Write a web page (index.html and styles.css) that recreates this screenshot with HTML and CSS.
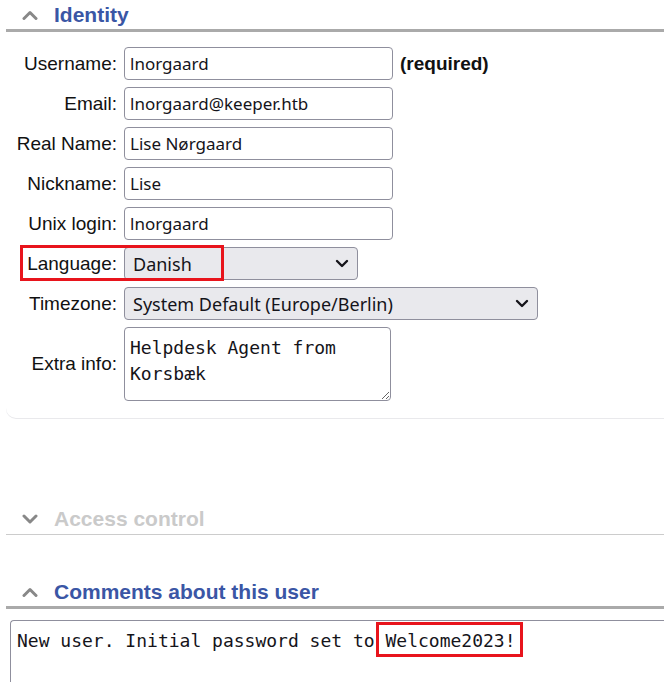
FILE: index.html
```html
<!DOCTYPE html>
<html lang="en">
<head>
<meta charset="utf-8">
<title>User - Identity</title>
<link rel="stylesheet" href="styles.css">
</head>
<body>
<div class="section identity">
  <div class="head head-open">
    <svg class="chev" width="16" height="10" viewBox="0 0 16 10"><polyline points="2,8.5 8,2.5 14,8.5"/></svg>
    <span class="title">Identity</span>
  </div>
  <div class="form">
    <label class="lbl">Username:</label>
    <div class="field"><input class="txt" type="text" value="lnorgaard"><span class="req">(required)</span></div>
    <label class="lbl">Email:</label>
    <div class="field"><input class="txt" type="text" value="lnorgaard@keeper.htb"></div>
    <label class="lbl">Real Name:</label>
    <div class="field"><input class="txt" type="text" value="Lise Nørgaard"></div>
    <label class="lbl">Nickname:</label>
    <div class="field"><input class="txt" type="text" value="Lise"></div>
    <label class="lbl">Unix login:</label>
    <div class="field"><input class="txt" type="text" value="lnorgaard"></div>
    <label class="lbl">Language:</label>
    <div class="field"><select class="sel sel-lang"><option>Danish</option></select></div>
    <label class="lbl">Timezone:</label>
    <div class="field"><select class="sel sel-tz"><option>System Default (Europe/Berlin)</option></select></div>
    <label class="lbl lbl-area">Extra info:</label>
    <div class="field"><textarea class="area">Helpdesk Agent from
Korsbæk</textarea></div>
    <div class="mark mark-lang"></div>
  </div>
</div>

<div class="section access">
  <div class="head head-closed">
    <svg class="chev" width="16" height="10" viewBox="0 0 16 10"><polyline points="2,2 8,8 14,2"/></svg>
    <span class="title title-dim">Access control</span>
  </div>
</div>

<div class="section comments">
  <div class="head head-open">
    <svg class="chev" width="16" height="10" viewBox="0 0 16 10"><polyline points="2,8.5 8,2.5 14,8.5"/></svg>
    <span class="title">Comments about this user</span>
  </div>
  <div class="comment-box">New user. Initial password set to <span class="hl">Welcome2023!</span></div>
</div>
</body>
</html>
```

FILE: styles.css
```css
html, body {
  margin: 0;
  padding: 0;
  overflow: hidden;
  background: #ffffff;
}
body {
  font-family: "Liberation Sans", Arial, sans-serif;
  color: #1a1a1a;
  width: 664px;
  height: 682px;
  overflow: hidden;
}
.section {
  margin-left: 6px;
}
.head {
  display: flex;
  align-items: center;
  padding-left: 16px;
  box-sizing: border-box;
}
.head-open {
  height: 32px;
  border-bottom: 3px solid #aaaaaa;
}
.head-closed {
  height: 31px;
  border-bottom: 1px solid #cccccc;
}
.chev {
  display: block;
  flex: none;
}
.chev polyline {
  fill: none;
  stroke: #888888;
  stroke-width: 3;
  stroke-linecap: round;
  stroke-linejoin: round;
}
.title {
  margin-left: 16px;
  font-size: 21px;
  font-weight: bold;
  color: #3a56a5;
  line-height: 24px;
}
.title-dim {
  color: #cacaca;
}
.identity {
  border-radius: 0 0 0 10px;
  box-shadow: 0 1px 0 #e9e9ec;
  padding-bottom: 17px;
}
.form {
  position: relative;
  display: grid;
  grid-template-columns: 111px auto;
  column-gap: 7px;
  row-gap: 7px;
  padding-top: 15px;
}
.lbl {
  font-size: 19px;
  text-align: right;
  align-self: center;
  color: #111111;
}
.field {
  display: flex;
  align-items: center;
  gap: 7px;
}
.txt {
  box-sizing: border-box;
  width: 269px;
  height: 33px;
  margin: 0;
  padding: 0 5px;
  border: 1px solid #8f8f9d;
  border-radius: 4px;
  font-family: "Noto Sans", "Open Sans", sans-serif;
  font-size: 17px;
  color: #15141a;
  background: #ffffff;
}
.req {
  font-size: 19px;
  font-weight: bold;
  color: #111111;
}
.sel {
  box-sizing: border-box;
  height: 33px;
  margin: 0;
  padding: 0 30px 0 8px;
  border: 1px solid #8f8f9d;
  border-radius: 4px;
  font-family: "Noto Sans", "Open Sans", sans-serif;
  font-size: 18px;
  color: #15141a;
  background-color: #e9e9ed;
  -webkit-appearance: none;
  appearance: none;
  background-image: url("data:image/svg+xml;utf8,<svg xmlns='http://www.w3.org/2000/svg' width='14' height='9' viewBox='0 0 14 9'><polyline points='2,2 7,7 12,2' fill='none' stroke='%2315141a' stroke-width='2.4' stroke-linecap='round' stroke-linejoin='round'/></svg>");
  background-repeat: no-repeat;
  background-position: right 8px center;
}
.sel-lang {
  width: 234px;
}
.sel-tz {
  width: 414px;
}
.lbl-area {
  align-self: center;
}
.area {
  box-sizing: border-box;
  width: 267px;
  height: 74px;
  margin: 0;
  padding: 7px 5px;
  border: 1px solid #8f8f9d;
  border-radius: 4px;
  font-family: "DejaVu Sans Mono", monospace;
  font-size: 18px;
  line-height: 26px;
  color: #15141a;
  resize: both;
  overflow: hidden;
}
.mark {
  position: absolute;
  box-sizing: border-box;
  border: 3px solid #e8141c;
  pointer-events: none;
}
.mark-lang {
  left: 14px;
  top: 213px;
  width: 204px;
  height: 36px;
}
.access {
  margin-top: 86px;
}
.comments {
  margin-top: 42px;
}
.comment-box {
  box-sizing: border-box;
  margin-top: 11px;
  margin-left: 4px;
  width: 654px;
  height: 80px;
  padding: 7px 6px;
  border: 1px solid #8f8f9d;
  border-right: none;
  border-radius: 4px 0 0 4px;
  font-family: "DejaVu Sans Mono", monospace;
  font-size: 18px;
  line-height: 26px;
  color: #15141a;
  white-space: pre;
  overflow: hidden;
}
.hl {
  position: relative;
}
.hl::after {
  content: "";
  position: absolute;
  left: -9px;
  right: -7px;
  top: -8px;
  bottom: -6px;
  border: 3px solid #e8141c;
  pointer-events: none;
}
```
